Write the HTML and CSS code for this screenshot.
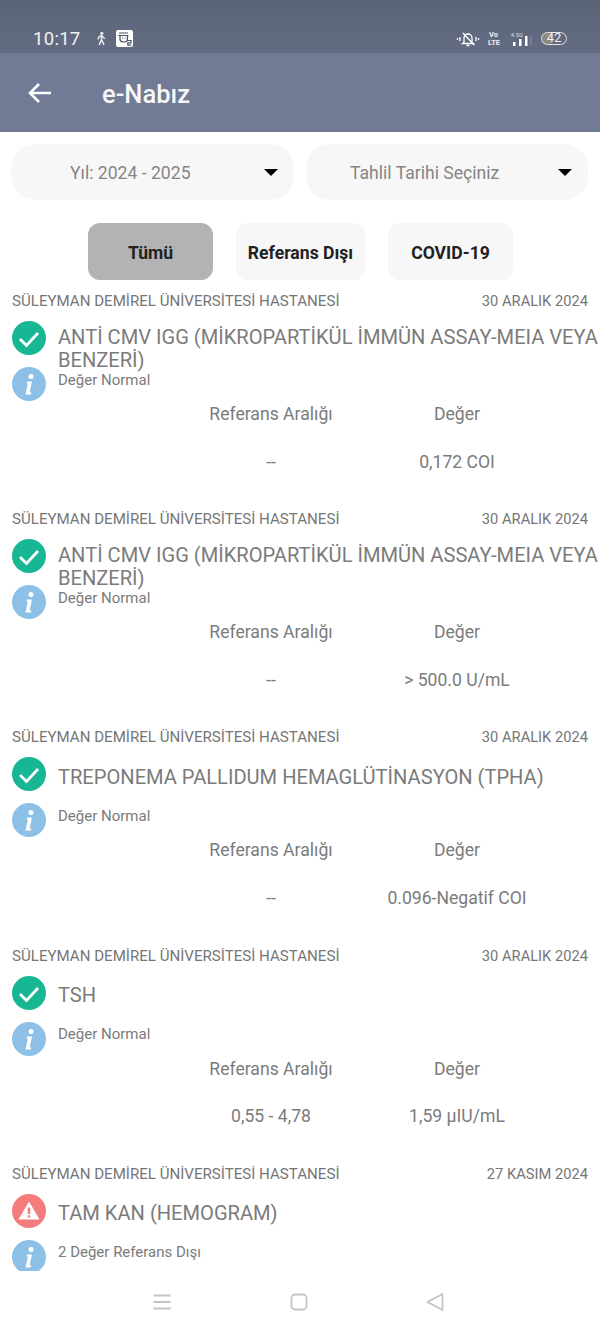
FILE: index.html
```html
<!DOCTYPE html>
<html lang="tr">
<head>
  <meta charset="UTF-8" />
  <meta name="viewport" content="width=device-width, initial-scale=1.0" />
  <title>e-Nabız</title>
  <link rel="stylesheet" href="styles.css">
</head>
<body>

  <!-- Status bar -->
  <div class="status-bar">
    <span class="clock">10:17</span>
    <svg class="walk-icon" width="11" height="15" viewBox="0 0 12 16">
      <circle cx="6.4" cy="2.200" r="1.700" fill="#eee"/>
      <path d="M6 4.500 L3 6.500 L2.200 9 M6 4.500 L9.500 8.400 M6 4.500 L6 9.500 L3.400 15 M6 9.500 L8.800 15" stroke="#eee" stroke-width="1.600" fill="none"/>
    </svg>
    <svg class="app-icon" width="17" height="17" viewBox="0 0 17 17">
      <rect width="17" height="17" rx="2" fill="#fff"/>
      <path d="M3 3h9M2.500 5.500h10M4 5.500v3.500a3 3 0 0 0 3 3h1.500a3 3 0 0 0 3-3V5.500" stroke="#4a5266" stroke-width="1.200" fill="none"/>
      <path d="M6 8h1M8.500 8h1" stroke="#4a5266" stroke-width="1.200"/>
      <path d="M11.500 10.500h3.500v2.300h-3.200v2.400h3.500" stroke="#4a5266" stroke-width="1.200" fill="none"/>
    </svg>
    <div class="status-right">
      <svg class="mute-icon" width="24" height="16" viewBox="0 0 24 16">
        <path d="M8 11.500 V7 a4 4 0 0 1 8 0 V11.500 L17.500 12.500 H6.500 Z M10.500 14.500 h3 M7 2 L18 14" stroke="#fff" stroke-width="1.300" fill="none"/>
        <path d="M4 6v4M1.500 7v2M20 6v4M22.500 7v2" stroke="#fff" stroke-width="1.300"/>
      </svg>
      <span class="volte">Vo<br>LTE</span>
      <div class="signal">
        <span class="net">4.5G</span>
        <svg width="22" height="10" viewBox="0 0 22 10">
          <path d="M3 6h2.500v4H3zM9 3h2.500v7H9zM15 0h2.500v10H15z" fill="#fff"/>
          <path d="M21 0v10" stroke="#8a91a3" stroke-width="1"/>
        </svg>
      </div>
      <span class="battery">42</span>
    </div>
  </div>

  <!-- App bar -->
  <div class="app-bar">
    <svg class="back-icon" width="26" height="24" viewBox="0 0 26 24">
      <path d="M24 12H3M12 3l-9 9 9 9" stroke="#fff" stroke-width="2.600" fill="none"/>
    </svg>
    <h1>e-Nabız</h1>
  </div>

  <div class="content">
    <!-- Dropdowns -->
    <div class="filters">
      <div class="select">
        <span>Yıl: 2024 - 2025</span>
        <i class="caret"></i>
      </div>
      <div class="select">
        <span>Tahlil Tarihi Seçiniz</span>
        <i class="caret"></i>
      </div>
    </div>

    <!-- Tabs -->
    <div class="tabs">
      <button class="tab tab-active">Tümü</button>
      <button class="tab tab-wide">Referans Dışı</button>
      <button class="tab">COVID-19</button>
    </div>

    <!-- Results -->
    <div class="card">
      <div class="card-head"><span>SÜLEYMAN DEMİREL ÜNİVERSİTESİ HASTANESİ</span><span class="date">30 ARALIK 2024</span></div>
      <div class="card-body">
        <div class="icons">
          <svg class="status-icon" viewBox="0 0 34 34"><circle cx="17" cy="17" r="17" fill="#17b794"/><path d="M8 18l6.500 6.500L26 12" stroke="#fff" stroke-width="2.800" fill="none"/></svg>
          <svg class="status-icon" viewBox="0 0 34 34"><circle cx="17" cy="17" r="17" fill="#8dc0e6"/><path d="M15 14.500h5l-2.400 11h1.800l-.5 2h-5.400l2.400-11h-1.400z" fill="#fff"/><circle cx="19" cy="9.500" r="2.500" fill="#fff"/></svg>
        </div>
        <div class="info">
          <div class="title">ANTİ CMV IGG (MİKROPARTİKÜL İMMÜN ASSAY-MEIA VEYA BENZERİ)</div>
          <div class="note">Değer Normal</div>
        </div>
      </div>
      <div class="values"><span>Referans Aralığı</span><span>Değer</span><span>--</span><span>0,172 COI</span></div>
    </div>

    <div class="card">
      <div class="card-head"><span>SÜLEYMAN DEMİREL ÜNİVERSİTESİ HASTANESİ</span><span class="date">30 ARALIK 2024</span></div>
      <div class="card-body">
        <div class="icons">
          <svg class="status-icon" viewBox="0 0 34 34"><circle cx="17" cy="17" r="17" fill="#17b794"/><path d="M8 18l6.500 6.500L26 12" stroke="#fff" stroke-width="2.800" fill="none"/></svg>
          <svg class="status-icon" viewBox="0 0 34 34"><circle cx="17" cy="17" r="17" fill="#8dc0e6"/><path d="M15 14.500h5l-2.400 11h1.800l-.5 2h-5.400l2.400-11h-1.400z" fill="#fff"/><circle cx="19" cy="9.500" r="2.500" fill="#fff"/></svg>
        </div>
        <div class="info">
          <div class="title">ANTİ CMV IGG (MİKROPARTİKÜL İMMÜN ASSAY-MEIA VEYA BENZERİ)</div>
          <div class="note">Değer Normal</div>
        </div>
      </div>
      <div class="values"><span>Referans Aralığı</span><span>Değer</span><span>--</span><span>&gt; 500.0 U/mL</span></div>
    </div>

    <div class="card">
      <div class="card-head"><span>SÜLEYMAN DEMİREL ÜNİVERSİTESİ HASTANESİ</span><span class="date">30 ARALIK 2024</span></div>
      <div class="card-body">
        <div class="icons">
          <svg class="status-icon" viewBox="0 0 34 34"><circle cx="17" cy="17" r="17" fill="#17b794"/><path d="M8 18l6.500 6.500L26 12" stroke="#fff" stroke-width="2.800" fill="none"/></svg>
          <svg class="status-icon" viewBox="0 0 34 34"><circle cx="17" cy="17" r="17" fill="#8dc0e6"/><path d="M15 14.500h5l-2.400 11h1.800l-.5 2h-5.400l2.400-11h-1.400z" fill="#fff"/><circle cx="19" cy="9.500" r="2.500" fill="#fff"/></svg>
        </div>
        <div class="info">
          <div class="title title-one">TREPONEMA PALLIDUM HEMAGLÜTİNASYON (TPHA)</div>
          <div class="note">Değer Normal</div>
        </div>
      </div>
      <div class="values"><span>Referans Aralığı</span><span>Değer</span><span>--</span><span>0.096-Negatif COI</span></div>
    </div>

    <div class="card">
      <div class="card-head"><span>SÜLEYMAN DEMİREL ÜNİVERSİTESİ HASTANESİ</span><span class="date">30 ARALIK 2024</span></div>
      <div class="card-body">
        <div class="icons">
          <svg class="status-icon" viewBox="0 0 34 34"><circle cx="17" cy="17" r="17" fill="#17b794"/><path d="M8 18l6.500 6.500L26 12" stroke="#fff" stroke-width="2.800" fill="none"/></svg>
          <svg class="status-icon" viewBox="0 0 34 34"><circle cx="17" cy="17" r="17" fill="#8dc0e6"/><path d="M15 14.500h5l-2.400 11h1.800l-.5 2h-5.400l2.400-11h-1.400z" fill="#fff"/><circle cx="19" cy="9.500" r="2.500" fill="#fff"/></svg>
        </div>
        <div class="info">
          <div class="title title-one">TSH</div>
          <div class="note">Değer Normal</div>
        </div>
      </div>
      <div class="values"><span>Referans Aralığı</span><span>Değer</span><span>0,55 - 4,78</span><span>1,59 µIU/mL</span></div>
    </div>

    <div class="card">
      <div class="card-head"><span>SÜLEYMAN DEMİREL ÜNİVERSİTESİ HASTANESİ</span><span class="date">27 KASIM 2024</span></div>
      <div class="card-body">
        <div class="icons">
          <svg class="status-icon" viewBox="0 0 34 34"><circle cx="17" cy="17" r="17" fill="#f47c7c"/><path d="M17 7.500L27.500 25.500H6.500z" fill="#fff"/><path d="M15.800 13.500h2.400v6.500h-2.400zM15.800 21.200h2.400v2.300h-2.400z" fill="#f47c7c"/></svg>
          <svg class="status-icon" viewBox="0 0 34 34"><circle cx="17" cy="17" r="17" fill="#8dc0e6"/><path d="M15 14.500h5l-2.400 11h1.800l-.5 2h-5.400l2.400-11h-1.400z" fill="#fff"/><circle cx="19" cy="9.500" r="2.500" fill="#fff"/></svg>
        </div>
        <div class="info">
          <div class="title title-one">TAM KAN (HEMOGRAM)</div>
          <div class="note">2 Değer Referans Dışı</div>
        </div>
      </div>
    </div>
  </div>

  <!-- Navigation bar -->
  <div class="nav-bar">
    <svg width="20" height="18" viewBox="0 0 20 18"><path d="M1.500 2.500h17M1.500 9h17M1.500 15.500h17" stroke="#c4c4c4" stroke-width="1.800"/></svg>
    <svg width="18" height="18" viewBox="0 0 18 18"><rect x="1.500" y="1.500" width="15" height="15" rx="3.500" stroke="#c4c4c4" stroke-width="1.800" fill="none"/></svg>
    <svg width="20" height="20" viewBox="0 0 20 20"><path d="M17.500 2 L2.500 10 L17.500 18 Z" stroke="#c4c4c4" stroke-width="1.800" stroke-linejoin="round" fill="none"/></svg>
  </div>

</body>
</html>
```

FILE: styles.css
```css
* {
  box-sizing: border-box;
}

html, body {
  margin: 0;
  height: 100%;
}

body {
  height: 1333px;
  display: flex;
  flex-direction: column;
  overflow: hidden;
  background: #fff;
  font-family: Roboto, sans-serif;
  color: #757575;
}

.status-bar {
  height: 53px;
  flex: none;
  display: flex;
  align-items: center;
  padding: 24px 33px 0 33px;
  background: linear-gradient(#5b6377, #646c83);
  color: #f2f2f2;
}

.clock {
  font-size: 18.500px;
  letter-spacing: 0.3px;
}

.walk-icon {
  margin-left: 15px;
}

.app-icon {
  margin-left: 9px;
}

.status-right {
  margin-left: auto;
  display: flex;
  align-items: center;
}

.volte {
  margin-left: 8px;
  width: 11px;
  font-size: 7.500px;
  line-height: 8px;
  font-weight: 700;
  color: #eee;
  text-align: center;
  white-space: nowrap;
}

.signal {
  margin-left: 11px;
  width: 22px;
  display: flex;
  flex-direction: column;
  align-items: center;
}

.net {
  font-size: 6px;
  line-height: 6px;
  color: #ddd;
  margin-right: 8px;
  margin-bottom: -2px;
}

.battery {
  margin-left: 9px;
  width: 26px;
  height: 13px;
  border: 1.500px solid #e4e4e4;
  border-radius: 7px;
  font-size: 13px;
  line-height: 10px;
  text-align: center;
  color: #eee;
  background: linear-gradient(90deg, #8b8a80 42%, transparent 42%);
}

.app-bar {
  height: 79px;
  flex: none;
  display: flex;
  align-items: center;
  padding: 2px 0 0 27px;
  background: #717b96;
}

.back-icon {
  margin-top: -1px;
}

.app-bar h1 {
  margin: 0 0 0 49px;
  font-size: 25.500px;
  font-weight: 500;
  color: #f7f7f7;
}

.content {
  flex: 1;
  min-height: 0;
  overflow: hidden;
  padding: 12px 11px 0 11px;
}

.filters {
  display: flex;
  gap: 12px;
}

.select {
  width: 283px;
  height: 56px;
  display: flex;
  align-items: center;
  padding: 2px 0 0 59px;
  background: #f7f7f7;
  border-radius: 24px;
  font-size: 17.600px;
  color: #858585;
}

.select + .select {
  width: 282px;
  padding-left: 44px;
}

.caret {
  margin-left: auto;
  margin-right: 16px;
  margin-top: -2px;
  width: 0;
  height: 0;
  border-left: 7px solid transparent;
  border-right: 7px solid transparent;
  border-top: 7px solid #000;
}

.tabs {
  display: flex;
  justify-content: center;
  gap: 23px;
  margin-top: 23px;
  padding-left: 1px;
}

.tab {
  width: 125px;
  height: 57px;
  padding: 2px 0 0;
  border: none;
  border-radius: 12px;
  background: #f7f7f7;
  font-family: Roboto, sans-serif;
  font-size: 17.600px;
  font-weight: 700;
  color: #222;
}

.tab-wide {
  width: 129px;
}

.tab-active {
  background: #b3b3b3;
}

.card {
  height: 218.200px;
  padding: 11px 1px 0;
}

.card-head {
  display: flex;
  justify-content: space-between;
  height: 20px;
  line-height: 20px;
  font-size: 15.100px;
  color: #767676;
}

.date {
  font-size: 14.700px;
}

.card-body {
  display: flex;
}

.icons {
  width: 34px;
  flex: none;
  display: flex;
  flex-direction: column;
  gap: 12px;
  padding-top: 10px;
}

.status-icon {
  width: 34px;
  height: 34px;
  display: block;
}

.info {
  margin-left: 12px;
  margin-right: -12px;
  padding-top: 14.500px;
  flex: 1;
  min-width: 0;
}

.title {
  height: 45px;
  font-size: 20.100px;
  line-height: 23px;
  color: #7b7b7b;
}

.title-one {
  padding-top: 4px;
}

.note {
  font-size: 15px;
  line-height: 19px;
  color: #7b7b7b;
}

.values {
  display: grid;
  grid-template-columns: 186px 186px;
  grid-template-rows: 24px 24px;
  row-gap: 23.500px;
  margin-top: 1px;
  margin-left: 166px;
  font-size: 17.600px;
  line-height: 24px;
  text-align: center;
  color: #7b7b7b;
}

.nav-bar {
  height: 62px;
  flex: none;
  display: flex;
  align-items: center;
  justify-content: space-between;
  padding: 0 155px 0 152px;
  background: #fff;
}
```
